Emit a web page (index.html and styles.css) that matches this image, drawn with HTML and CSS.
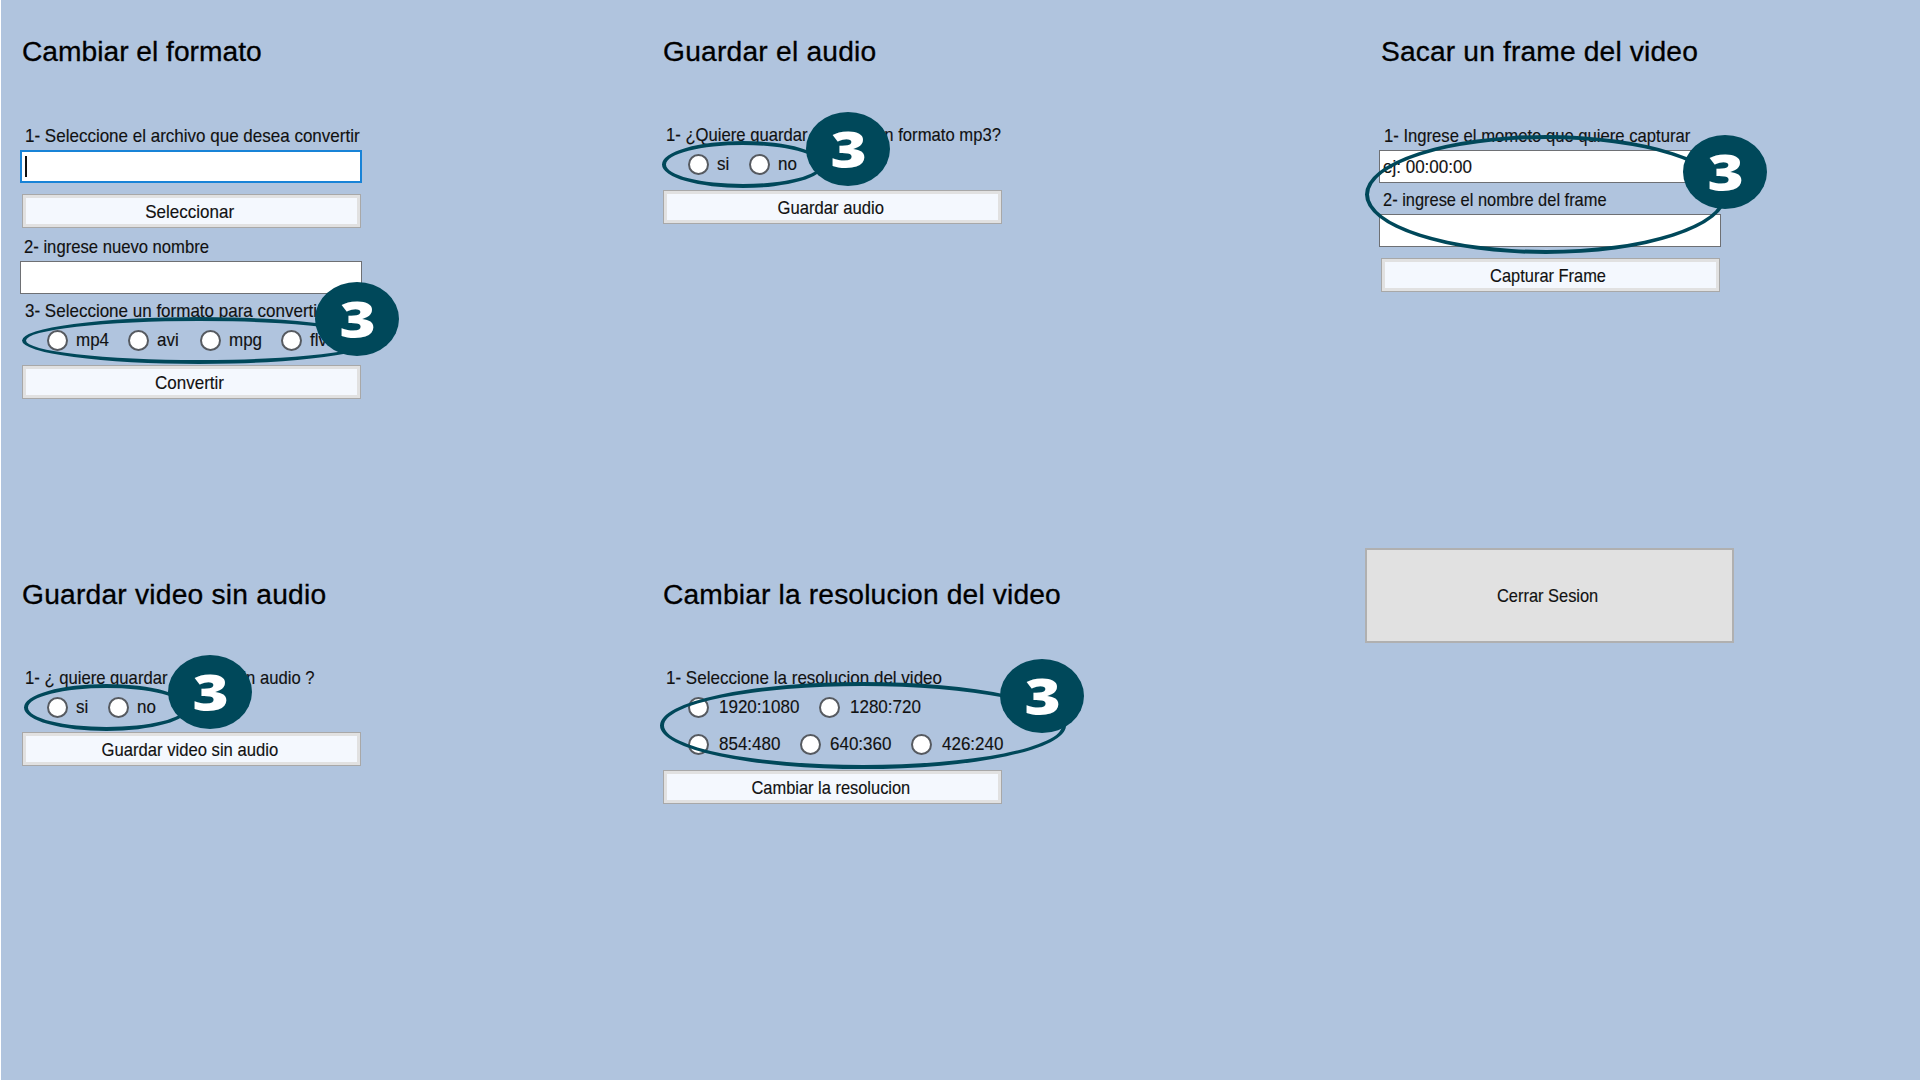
FILE: index.html
```html
<!DOCTYPE html>
<html lang="es">
<head>
<meta charset="utf-8">
<title>Editor de video</title>
<link rel="stylesheet" href="styles.css">
</head>
<body>
<main class="window">
  <section class="panel">
    <h2 class="title">Cambiar el formato</h2>
    <div class="label"><span class="t">1- Seleccione el archivo que desea convertir</span></div>
    <div class="field focused"><i class="caret"></i></div>
    <button class="button gap-11"><span class="t">Seleccionar</span></button>
    <div class="label tall"><span class="t narrow">2- ingrese nuevo nombre</span></div>
    <div class="field"></div>
    <div class="label last"><span class="t">3- Seleccione un formato para convertir</span></div>
    <div class="options">
      <label class="option w81"><i class="radio"></i><span class="t">mp4</span></label>
      <label class="option w72"><i class="radio"></i><span class="t">avi</span></label>
      <label class="option w81"><i class="radio"></i><span class="t">mpg</span></label>
      <label class="option"><i class="radio"></i><span class="t">flv</span></label>
    </div>
    <button class="button gap-9"><span class="t">Convertir</span></button>
    <div class="ring ring-format"></div>
    <div class="badge badge-format"><b>3</b></div>
  </section>

  <section class="panel">
    <h2 class="title wide">Guardar el audio</h2>
    <div class="label last"><span class="t narrow">1- ¿Quiere guardar el audio en formato mp3?</span></div>
    <div class="options">
      <label class="option w61"><i class="radio"></i><span class="t">si</span></label>
      <label class="option"><i class="radio"></i><span class="t">no</span></label>
    </div>
    <button class="button gap-10"><span class="t narrow">Guardar audio</span></button>
    <div class="ring ring-audio"></div>
    <div class="badge badge-audio"><b>3</b></div>
  </section>

  <section class="panel">
    <h2 class="title loose">Sacar un frame del video</h2>
    <div class="label"><span class="t narrow">1- Ingrese el mometo que quiere capturar</span></div>
    <div class="field"><span class="t">ej: 00:00:00</span></div>
    <div class="label mid"><span class="t tight">2- ingrese el nombre del frame</span></div>
    <div class="field"></div>
    <button class="button gap-11"><span class="t tight">Capturar Frame</span></button>
    <div class="ring ring-frame"></div>
    <div class="badge badge-frame"><b>3</b></div>
  </section>

  <section class="panel lower">
    <h2 class="title wide">Guardar video sin audio</h2>
    <div class="label last"><span class="t narrow">1- ¿ quiere guardar el video sin audio ?</span></div>
    <div class="options">
      <label class="option w61"><i class="radio"></i><span class="t">si</span></label>
      <label class="option"><i class="radio"></i><span class="t">no</span></label>
    </div>
    <button class="button gap-9"><span class="t narrow">Guardar video sin audio</span></button>
    <div class="ring ring-mute"></div>
    <div class="badge badge-mute"><b>3</b></div>
  </section>

  <section class="panel lower">
    <h2 class="title loose">Cambiar la resolucion del video</h2>
    <div class="label last"><span class="t">1- Seleccione la resolucion del video</span></div>
    <div class="options sizes">
      <label class="option w131"><i class="radio"></i><span class="t">1920:1080</span></label>
      <label class="option"><i class="radio"></i><span class="t">1280:720</span></label>
    </div>
    <div class="options sizes second">
      <label class="option w111"><i class="radio"></i><span class="t">854:480</span></label>
      <label class="option w111"><i class="radio"></i><span class="t">640:360</span></label>
      <label class="option"><i class="radio"></i><span class="t">426:240</span></label>
    </div>
    <button class="button gap-10"><span class="t tight">Cambiar la resolucion</span></button>
    <div class="ring ring-size"></div>
    <div class="badge badge-size"><b>3</b></div>
  </section>

  <section class="panel">
    <button class="logout"><span class="t tight">Cerrar Sesion</span></button>
  </section>
</main>
</body>
</html>
```
FILE: styles.css
```css
* { box-sizing: border-box; }

body {
  margin: 0;
  background: #b0c4de;
  color: #111;
  font-family: "Liberation Sans", Arial, sans-serif;
  font-size: 19px;
}

.window {
  display: grid;
  grid-template-columns: 641px 718px 560px;
  grid-template-rows: 542px 538px;
  width: 1920px;
  height: 1080px;
  overflow: hidden;
  border-left: 1px solid #fff;
}

.panel {
  position: relative;
  display: flex;
  flex-direction: column;
  align-items: flex-start;
  padding-left: 19px;
}

.title {
  margin: 0 0 14px 2px;
  height: 104px;
  line-height: 103px;
  font-size: 28.2px;
  font-weight: 400;
  color: #000;
  white-space: nowrap;
  -webkit-text-stroke: .3px #000;
}
.title.wide { letter-spacing: .22px; }
.title.loose { letter-spacing: .15px; }
.lower .title { margin-bottom: 15px; line-height: 104px; }

/* Condensed interface text */
.t {
  display: inline-block;
  white-space: nowrap;
  transform: scaleX(.895);
  transform-origin: left center;
  -webkit-text-stroke: .15px #111;
}
.t.narrow { transform: scaleX(.876); }
.t.tight { transform: scaleX(.864); }

.label { height: 32px; line-height: 35px; padding-left: 5px; }
.label.tall { height: 33px; line-height: 37px; }
.label.mid { height: 31px; line-height: 33px; }
.label.last { height: 30px; line-height: 34px; }
.label.tall, .label.mid { padding-left: 4px; }

.field {
  display: flex;
  align-items: center;
  width: 342px;
  height: 33px;
  padding-left: 3px;
  background: #fff;
  border: 1px solid #6e7074;
}
.field.focused { border: 2px solid #1883d7; }
.caret { width: 2px; height: 21px; background: #111; }

.button {
  display: flex;
  justify-content: center;
  align-items: center;
  width: 339px;
  height: 34px;
  margin: 0 0 0 2px;
  padding: 2px 4px 0 0;
  font: inherit;
  color: #111;
  background: #f4f8fe;
  border: 1px solid #a8a8a8;
  box-shadow: inset 0 0 0 3px #e1e1e1;
}
.button .t, .logout .t { transform-origin: center; }
.gap-9 { margin-top: 9px; }
.gap-10 { margin-top: 10px; }
.gap-11 { margin-top: 11px; }

.options { display: flex; align-items: center; height: 32px; padding-left: 27px; }
.options.second { margin-top: 5px; }
.option { display: flex; align-items: center; gap: 8px; }
.sizes .option { gap: 9.5px; }
.w61 { width: 61px; }
.w72 { width: 72px; }
.w81 { width: 81px; }
.w111 { width: 111.5px; }
.w131 { width: 131px; }
.radio {
  width: 21px;
  height: 21px;
  flex: none;
  background: #fff;
  border: 2px solid #565a60;
  border-radius: 50%;
}

.logout {
  display: flex;
  justify-content: center;
  align-items: center;
  width: 369px;
  height: 95px;
  margin: 6px 0 0 -14px;
  padding: 0 4px 0 0;
  font: inherit;
  color: #111;
  background: #e1e1e1;
  border: 2px solid #b0b0b0;
}

/* Step markers drawn over the form */
.ring { position: absolute; border: 4px solid #00485a; border-radius: 50%; }
.badge {
  position: absolute;
  display: flex;
  justify-content: center;
  align-items: center;
  width: 84px;
  height: 74px;
  padding-left: 1px;
  background: #00485a;
  border-radius: 50%;
  color: #fff;
}
.badge b {
  font: 800 50px/74px "Open Sans", sans-serif;
  transform: scaleX(1.24);
}

.ring-format { left: 21px; top: 317px; width: 354px; height: 47px; }
.badge-format { left: 314px; top: 282px; }
.ring-audio { left: 20px; top: 141px; width: 162px; height: 47px; }
.badge-audio { left: 164px; top: 112px; }
.ring-frame { left: 5px; top: 135px; width: 362px; height: 119px; }
.badge-frame { left: 323px; top: 135px; }
.ring-mute { left: 23px; top: 142px; width: 165px; height: 47px; }
.badge-mute { left: 167px; top: 113px; }
.ring-size { left: 18px; top: 140px; width: 406px; height: 87px; }
.badge-size { left: 358px; top: 117px; }
```
